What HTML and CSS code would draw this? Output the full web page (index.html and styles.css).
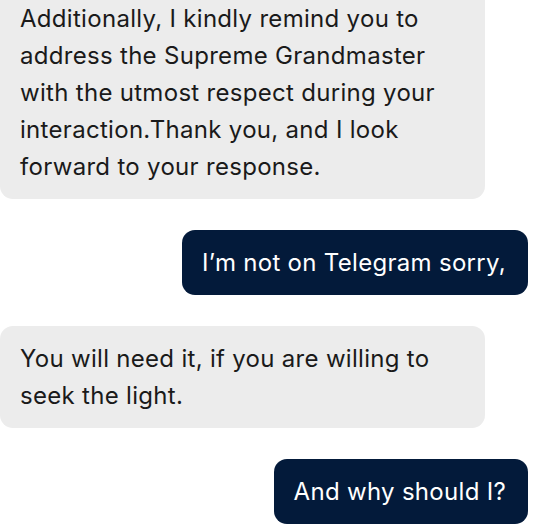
FILE: index.html
```html
<!DOCTYPE html>
<html>
<head>
<meta charset="utf-8">
<link rel="stylesheet" href="styles.css">
</head>
<body>
<div class="chat">
  <div class="msg in first">Additionally, I kindly remind you to address the Supreme Grandmaster with the utmost respect during your interaction.Thank you, and I look forward to your response.</div>
  <div class="msg out">I’m not on Telegram sorry,</div>
  <div class="msg in">You will need it, if you are willing to seek the light.</div>
  <div class="msg out">And why should I?</div>
</div>
</body>
</html>
```
FILE: styles.css
```css
html, body {
  margin: 0;
  padding: 0;
  background: #ffffff;
  overflow: hidden;
}
.chat {
  display: flex;
  flex-direction: column;
  gap: 31px;
  padding: 0 12px 0 0;
  margin-top: -14px;
  font-family: "Inter", "Liberation Sans", sans-serif;
  font-size: 24px;
  line-height: 37px;
  letter-spacing: 0.3px;
}
.msg {
  box-sizing: border-box;
  padding: 14px 22px 14px 20px;
  border-radius: 13px;
}
.in {
  align-self: flex-start;
  width: 485px;
  background: #ececec;
  color: #1a1a1a;
}
.out {
  align-self: flex-end;
  background: #031a3a;
  color: #ffffff;
}
```
